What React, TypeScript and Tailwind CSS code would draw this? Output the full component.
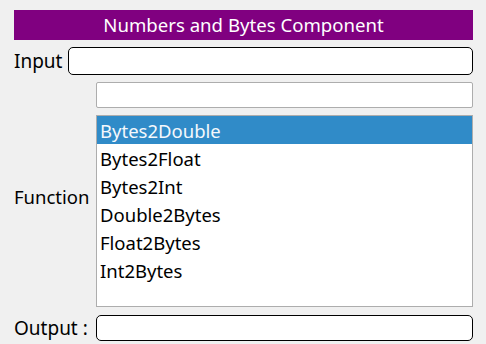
import { useState } from 'react';

const functions = ['Bytes2Double', 'Bytes2Float', 'Bytes2Int', 'Double2Bytes', 'Float2Bytes', 'Int2Bytes'];

export default function App() {
  const [selected, setSelected] = useState('Bytes2Double');

  return (
    <div className="w-[486px] h-[344px] bg-[#f0f0f0] pl-[14px] pr-[13px] pt-[10px] text-[18.5px] text-black font-['Noto_Sans',sans-serif] overflow-hidden">
      <div className="h-[30px] bg-[#800080] text-white flex items-center justify-center text-[18.6px] leading-none">
        Numbers and Bytes Component
      </div>

      {/* Input row */}
      <div className="flex items-center mt-[7px] h-[28px]">
        <span className="w-[54px] leading-none text-[19px]">Input</span>
        <input className="flex-1 h-[28px] bg-white border border-black rounded-[5px] px-1 outline-none" />
      </div>

      {/* Function rows: label spans the text box and the list */}
      <div className="grid grid-cols-[82px_1fr] grid-rows-[26px_192px] gap-y-[7px] mt-[7px]">
        <div className="row-span-2 flex items-center leading-none pt-[5px]">Function</div>
        <input className="h-[26px] bg-white border border-[#adadad] rounded-[2px] px-1 outline-none" />
        <ul className="bg-white border border-[#adadad]">
          {functions.map(fn => (
            <li
              key={fn}
              onClick={() => setSelected(fn)}
              className={fn === selected
                ? 'h-[28px] pl-[3px] pt-[3px] flex items-center leading-none bg-[#308bc8] text-[#f4f8fc]'
                : 'h-[28px] pl-[3px] pt-[3px] flex items-center leading-none'}
            >
              {fn}
            </li>
          ))}
        </ul>
      </div>

      {/* Output row */}
      <div className="grid grid-cols-[82px_1fr] mt-[8px] items-center">
        <span className="leading-none text-[19px]">Output :</span>
        <input className="h-[26px] bg-white border border-black rounded-[5px] px-1 outline-none" />
      </div>
    </div>
  );
}
